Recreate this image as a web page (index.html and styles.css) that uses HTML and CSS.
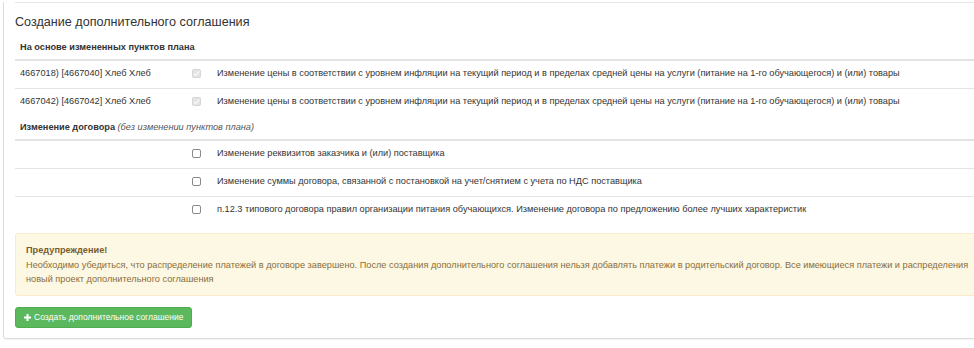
FILE: index.html
```html
<!DOCTYPE html>
<html lang="ru">
  <head>
    <meta charset="UTF-8" />
    <meta name="viewport" content="width=device-width, initial-scale=1.0" />
    <title>Создание дополнительного соглашения</title>
    <link rel="stylesheet" href="styles.css">
  </head>
  <body>
    <div class="panel">
      <div class="top-rule"></div>
      <h3 class="panel-title">Создание дополнительного соглашения</h3>

      <!-- Пункты плана -->
      <table class="items items-first">
        <thead>
          <tr>
            <th colspan="3">На основе измененных пунктов плана</th>
          </tr>
        </thead>
        <tbody>
          <tr>
            <td class="col-name">4667018) [4667040] Хлеб Хлеб</td>
            <td class="col-check"><span class="check checked disabled"></span></td>
            <td>Изменение цены в соответствии с уровнем инфляции на текущий период и в пределах средней цены на услуги (питание на 1-го обучающегося) и (или) товары</td>
          </tr>
          <tr>
            <td class="col-name">4667042) [4667042] Хлеб Хлеб</td>
            <td class="col-check"><span class="check checked disabled"></span></td>
            <td>Изменение цены в соответствии с уровнем инфляции на текущий период и в пределах средней цены на услуги (питание на 1-го обучающегося) и (или) товары</td>
          </tr>
        </tbody>
      </table>

      <!-- Изменение договора -->
      <table class="items">
        <thead>
          <tr>
            <th colspan="3">Изменение договора <em>(без изменении пунктов плана)</em></th>
          </tr>
        </thead>
        <tbody>
          <tr>
            <td class="col-name"></td>
            <td class="col-check"><span class="check"></span></td>
            <td>Изменение реквизитов заказчика и (или) поставщика</td>
          </tr>
          <tr>
            <td class="col-name"></td>
            <td class="col-check"><span class="check"></span></td>
            <td>Изменение суммы договора, связанной с постановкой на учет/снятием с учета по НДС поставщика</td>
          </tr>
          <tr>
            <td class="col-name"></td>
            <td class="col-check"><span class="check"></span></td>
            <td>п.12.3 типового договора правил организации питания обучающихся. Изменение договора по предложению более лучших характеристик</td>
          </tr>
        </tbody>
      </table>

      <div class="alert">
        <strong>Предупреждение!</strong><br>
        Необходимо убедиться, что распределение платежей в договоре завершено. После создания дополнительного соглашения нельзя добавлять платежи в родительский договор. Все имеющиеся платежи и распределения<br>
        новый проект дополнительного соглашения
      </div>

      <button type="button" class="btn-create">
        <svg class="icon-plus" width="7" height="7" viewBox="0 0 7 7"><path d="M2.5 0h2v2.5H7v2H4.5V7h-2V4.5H0v-2h2.5z" fill="#fff"/></svg>
        Создать дополнительное соглашение
      </button>
    </div>
  </body>
</html>
```

FILE: styles.css
```css
/* Базовые стили */
* {
  box-sizing: border-box;
  margin: 0;
  padding: 0;
}

html,
body {
  overflow: hidden;
}

body {
  font-family: "Liberation Sans", Arial, sans-serif;
  font-size: 9.2px;
  line-height: 14px;
  color: #333;
  background-color: #fff;
  width: 974px;
  height: 348px;
}

/* Панель */
.panel {
  width: 1300px;
  margin-left: 3px;
  padding: 0 11px 10px;
  border: 1px solid #ddd;
  border-top: none;
  border-radius: 0 0 3px 3px;
  box-shadow: 0 1px 1px rgba(0, 0, 0, 0.05);
}

.top-rule {
  margin-top: 2px;
  border-top: 1px solid #e6e6e6;
}

.panel-title {
  margin-top: 11px;
  font-size: 12.6px;
  line-height: 16px;
  font-weight: normal;
  color: #333;
}

/* Таблицы */
.items {
  width: 100%;
  border-collapse: collapse;
}

.items-first {
  margin-top: 6px;
}

.items th {
  text-align: left;
  font-weight: bold;
  padding: 4px 5px 5px;
  border-bottom: 2px solid #e3e3e3;
}

.items th em {
  font-weight: normal;
  font-style: italic;
  color: #555;
}

.items td {
  padding: 5px 5px 8px;
  border-top: 1px solid #e3e3e3;
  vertical-align: top;
  white-space: nowrap;
}

.items .col-name {
  width: 172px;
}

.items .col-check {
  width: 25px;
}

/* Флажки */
.check {
  display: block;
  width: 9px;
  height: 9px;
  margin-top: 3px;
  border: 1px solid #8a8a8a;
  border-radius: 2px;
  background-color: #fff;
}

.check.checked.disabled {
  border-color: #d6d6d6;
  background-color: #e4e4e4;
  position: relative;
}

.check.checked.disabled::after {
  content: "";
  position: absolute;
  left: 2px;
  top: 0px;
  width: 2px;
  height: 5px;
  border: solid #fafafa;
  border-width: 0 1.5px 1.5px 0;
  transform: rotate(40deg);
}

/* Предупреждение */
.alert {
  margin-top: 9px;
  padding: 9px 10px 8px;
  line-height: 14.5px;
  color: #8a6d3b;
  background-color: #fcf8e3;
  border: 1px solid #faebcc;
  border-radius: 3px;
  white-space: nowrap;
}

.alert strong {
  color: #7a5d2e;
}

/* Кнопка */
.btn-create {
  display: flex;
  align-items: center;
  gap: 3px;
  margin-top: 11px;
  height: 21px;
  padding: 0 8px 0 8px;
  font-family: inherit;
  font-size: 8.5px;
  color: #fff;
  background-color: #5cb85c;
  border: 1px solid #4cae4c;
  border-radius: 3px;
  cursor: pointer;
}

.icon-plus {
  display: block;
}
```
